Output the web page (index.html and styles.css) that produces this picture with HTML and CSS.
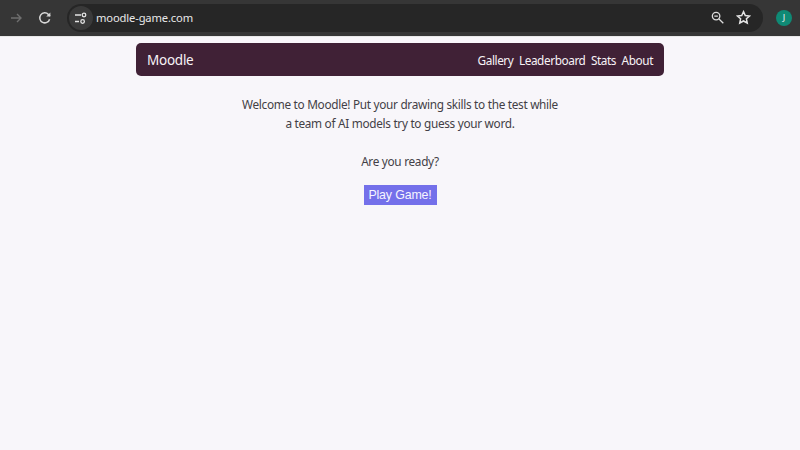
FILE: index.html
```html
<!DOCTYPE html>
<html lang="en">
<head>
<meta charset="utf-8">
<title>Moodle</title>
<link rel="stylesheet" href="styles.css">
</head>
<body>
<header class="chrome">
  <svg class="nav-icon" width="16" height="16" viewBox="0 0 16 16"><path d="M3 8h10M9 4l4 4-4 4" fill="none" stroke="#6f6f6f" stroke-width="1.4"/></svg>
  <svg class="nav-icon reload" width="16" height="16" viewBox="0 0 16 16"><path d="M12.6 9.2A5 5 0 1 1 11.4 4.4L13 6" fill="none" stroke="#d8d8d8" stroke-width="1.5"/><path d="M13.4 2.4v4.2H9.2z" fill="#d8d8d8"/></svg>
  <div class="omnibox">
    <span class="site-chip">
      <svg width="14" height="14" viewBox="0 0 14 14"><g fill="none" stroke="#e4e4e4" stroke-width="1.3"><path d="M1 4h6M1 10.5h4"/><circle cx="10" cy="4" r="1.8"/><circle cx="8.6" cy="10.5" r="1.8"/></g></svg>
    </span>
    <span class="url">moodle-game.com</span>
    <span class="omni-actions">
      <svg width="15" height="15" viewBox="0 0 16 16"><g fill="none" stroke="#dcdcdc" stroke-width="1.4"><circle cx="6.5" cy="6.5" r="4"/><path d="M9.6 9.6l4.6 4.6M4.6 6.5h3.8"/></g></svg>
      <svg width="15" height="15" viewBox="0 0 16 16"><path d="M8 1.8l1.9 4.1 4.5.5-3.3 3 .9 4.5L8 11.7l-4 2.2.9-4.5-3.3-3 4.5-.5z" fill="none" stroke="#e4e4e4" stroke-width="1.6"/></svg>
    </span>
  </div>
  <span class="avatar">J</span>
</header>
<main class="page">
  <nav class="navbar">
    <a class="brand">Moodle</a>
    <div class="links"><a>Gallery</a><a>Leaderboard</a><a>Stats</a><a>About</a></div>
  </nav>
  <p class="intro">Welcome to Moodle! Put your drawing skills to the test while<br>a team of AI models try to guess your word.</p>
  <p class="ready">Are you ready?</p>
  <button class="play">Play Game!</button>
</main>
</body>
</html>
```
FILE: styles.css
```css
* { box-sizing: border-box; }
html, body { margin: 0; height: 100%; }
body {
  width: 800px;
  height: 450px;
  overflow: hidden;
  background: #f8f6fa;
  font-family: "Noto Sans", sans-serif;
  display: flex;
  flex-direction: column;
}
.chrome {
  height: 37px;
  flex: none;
  background: #363636;
  display: flex;
  align-items: center;
  padding: 0 8px 1px 8px;
  border-bottom: 1px solid #e8e8e8;
}
.nav-icon { flex: none; }
.reload { margin-left: 13px; }
.omnibox {
  margin-left: 14px;
  width: 697px;
  height: 28px;
  background: #262626;
  border-radius: 14px;
  display: flex;
  align-items: center;
  padding: 0 12px 0 2px;
}
.site-chip {
  width: 24px;
  height: 24px;
  border-radius: 50%;
  background: #3a3a3a;
  display: flex;
  align-items: center;
  justify-content: center;
}
.url { margin-left: 3px; color: #e8e8e8; font-size: 11.2px; letter-spacing: -0.15px; }
.omni-actions { margin-left: auto; display: flex; gap: 11px; align-items: center; }
.avatar {
  margin-left: 13px;
  width: 16px;
  height: 16px;
  border-radius: 50%;
  background: #0f8a75;
  color: #f0f0f0;
  font-size: 9px;
  display: flex;
  align-items: center;
  justify-content: center;
}
.page {
  flex: 1;
  display: flex;
  flex-direction: column;
  align-items: center;
  padding-top: 6px;
  color: #433f46;
  letter-spacing: -0.3px;
}
.navbar {
  width: 528px;
  height: 33px;
  background: #402136;
  border-radius: 5px;
  color: #f7f3f6;
  display: flex;
  align-items: center;
  justify-content: space-between;
  padding: 0 11px;
}
.brand { font-size: 13.5px; letter-spacing: -0.25px; }
.links { display: flex; gap: 5.5px; font-size: 11.8px; letter-spacing: -0.42px; }
.intro {
  margin: 19px 0 0;
  font-size: 11.8px;
  line-height: 19px;
  text-align: center;
}
.ready { margin: 19px 0 0; font-size: 11.8px; line-height: 19px; }
.play {
  margin-top: 14px;
  width: 73px;
  height: 20px;
  padding: 0;
  border: 0;
  background: #7470ea;
  color: #f6f5ff;
  font-family: "Liberation Sans", sans-serif;
  font-size: 12.4px;
  letter-spacing: -0.15px;
}
```
